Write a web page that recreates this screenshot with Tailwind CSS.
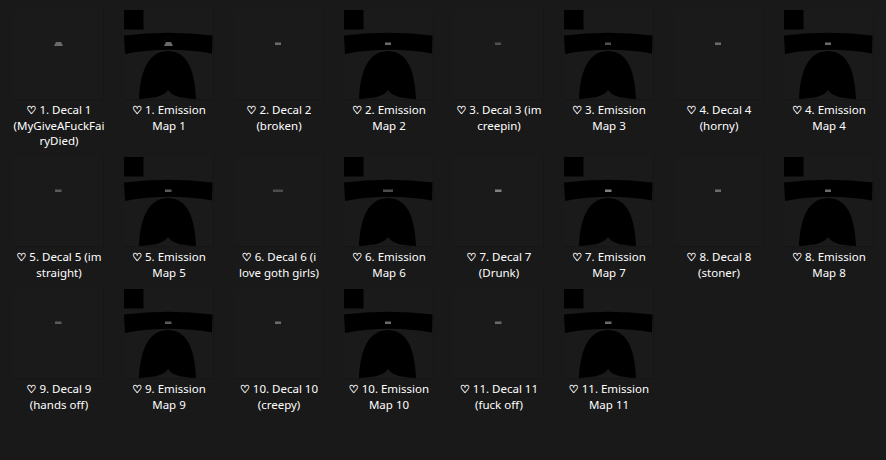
<!DOCTYPE html>
<html lang="en">
<head>
    <meta charset="UTF-8">
    <title>Decals</title>
    <script src="https://cdn.jsdelivr.net/npm/@tailwindcss/browser@4"></script>
</head>
<body class="bg-[#191919] overflow-hidden h-[460px] font-['Noto_Sans','Open_Sans',sans-serif] text-[11.5px] leading-[15.5px] text-white">
    <!-- shared thumbnail art -->
    <svg class="hidden">
        <symbol id="frame" viewBox="0 0 90 90">
            <path d="M89.5 0V90M0 89.5H90" stroke="#151515" fill="none"/>
        </symbol>
        <symbol id="uv" viewBox="0 0 90 90">
            <path d="M89.5 0V90M0 89.5H90" stroke="#151515" fill="none"/>
            <path d="M0 0H19.5V19.5H0Z" fill="#000"/>
            <path d="M0 25.5Q44 20 88.5 25.5L88 43.5Q44 36 1 44Z" fill="#000"/>
            <path d="M15 89C16 68 21 41.5 44 41C67 41.5 71 68 72 89C60 88 50 88 44 80C38 88 27 88 15 89Z" fill="#000"/>
        </symbol>
    </svg>
    <div class="grid grid-cols-[repeat(8,110px)] grid-rows-[139px_124px_124px] gap-y-2 pl-1 pt-[10px]">
        <div class="flex flex-col items-center"><svg class="w-[90px] h-[90px] bg-[#1a1a1a] blur-[0.4px]" viewBox="0 0 90 90"><use href="#frame"/><path d="M40 36L42 32H47L49 36Z" fill="#6a6a6a"/></svg><p class="mt-[2px] text-center whitespace-nowrap"><span class="font-['DejaVu_Sans'] text-[11px] leading-none [-webkit-text-stroke:0.3px_white]">♡</span> 1. Decal 1<br>(MyGiveAFuckFai<br>ryDied)</p></div>
        <div class="flex flex-col items-center"><svg class="w-[90px] h-[90px] bg-[#1a1a1a] blur-[0.4px]" viewBox="0 0 90 90"><use href="#uv"/><path d="M40 36L42 32H47L49 36Z" fill="#6a6a6a"/></svg><p class="mt-[2px] text-center whitespace-nowrap"><span class="font-['DejaVu_Sans'] text-[11px] leading-none [-webkit-text-stroke:0.3px_white]">♡</span> 1. Emission<br>Map 1</p></div>
        <div class="flex flex-col items-center"><svg class="w-[90px] h-[90px] bg-[#1a1a1a] blur-[0.4px]" viewBox="0 0 90 90"><use href="#frame"/><rect x="41" y="32.5" width="6" height="2.5" fill="#6a6a6a"/></svg><p class="mt-[2px] text-center whitespace-nowrap"><span class="font-['DejaVu_Sans'] text-[11px] leading-none [-webkit-text-stroke:0.3px_white]">♡</span> 2. Decal 2<br>(broken)</p></div>
        <div class="flex flex-col items-center"><svg class="w-[90px] h-[90px] bg-[#1a1a1a] blur-[0.4px]" viewBox="0 0 90 90"><use href="#uv"/><rect x="41" y="32.5" width="6" height="2.5" fill="#6a6a6a"/></svg><p class="mt-[2px] text-center whitespace-nowrap"><span class="font-['DejaVu_Sans'] text-[11px] leading-none [-webkit-text-stroke:0.3px_white]">♡</span> 2. Emission<br>Map 2</p></div>
        <div class="flex flex-col items-center"><svg class="w-[90px] h-[90px] bg-[#1a1a1a] blur-[0.4px]" viewBox="0 0 90 90"><use href="#frame"/><rect x="41" y="32.5" width="6" height="2.5" fill="#505050"/></svg><p class="mt-[2px] text-center whitespace-nowrap"><span class="font-['DejaVu_Sans'] text-[11px] leading-none [-webkit-text-stroke:0.3px_white]">♡</span> 3. Decal 3 (im<br>creepin)</p></div>
        <div class="flex flex-col items-center"><svg class="w-[90px] h-[90px] bg-[#1a1a1a] blur-[0.4px]" viewBox="0 0 90 90"><use href="#uv"/><rect x="41" y="32.5" width="6" height="2.5" fill="#505050"/></svg><p class="mt-[2px] text-center whitespace-nowrap"><span class="font-['DejaVu_Sans'] text-[11px] leading-none [-webkit-text-stroke:0.3px_white]">♡</span> 3. Emission<br>Map 3</p></div>
        <div class="flex flex-col items-center"><svg class="w-[90px] h-[90px] bg-[#1a1a1a] blur-[0.4px]" viewBox="0 0 90 90"><use href="#frame"/><rect x="41" y="32.5" width="6" height="2.5" fill="#6a6a6a"/></svg><p class="mt-[2px] text-center whitespace-nowrap"><span class="font-['DejaVu_Sans'] text-[11px] leading-none [-webkit-text-stroke:0.3px_white]">♡</span> 4. Decal 4<br>(horny)</p></div>
        <div class="flex flex-col items-center"><svg class="w-[90px] h-[90px] bg-[#1a1a1a] blur-[0.4px]" viewBox="0 0 90 90"><use href="#uv"/><rect x="41" y="32.5" width="6" height="2.5" fill="#6a6a6a"/></svg><p class="mt-[2px] text-center whitespace-nowrap"><span class="font-['DejaVu_Sans'] text-[11px] leading-none [-webkit-text-stroke:0.3px_white]">♡</span> 4. Emission<br>Map 4</p></div>

        <div class="flex flex-col items-center"><svg class="w-[90px] h-[90px] bg-[#1a1a1a] blur-[0.4px]" viewBox="0 0 90 90"><use href="#frame"/><rect x="41" y="32.5" width="6.5" height="2.5" fill="#5a5a5a"/></svg><p class="mt-[2px] text-center whitespace-nowrap"><span class="font-['DejaVu_Sans'] text-[11px] leading-none [-webkit-text-stroke:0.3px_white]">♡</span> 5. Decal 5 (im<br>straight)</p></div>
        <div class="flex flex-col items-center"><svg class="w-[90px] h-[90px] bg-[#1a1a1a] blur-[0.4px]" viewBox="0 0 90 90"><use href="#uv"/><rect x="41" y="32.5" width="6.5" height="2.5" fill="#5a5a5a"/></svg><p class="mt-[2px] text-center whitespace-nowrap"><span class="font-['DejaVu_Sans'] text-[11px] leading-none [-webkit-text-stroke:0.3px_white]">♡</span> 5. Emission<br>Map 5</p></div>
        <div class="flex flex-col items-center"><svg class="w-[90px] h-[90px] bg-[#1a1a1a] blur-[0.4px]" viewBox="0 0 90 90"><use href="#frame"/><rect x="39" y="32.5" width="10" height="2.5" fill="#4c4c4c"/></svg><p class="mt-[2px] text-center whitespace-nowrap"><span class="font-['DejaVu_Sans'] text-[11px] leading-none [-webkit-text-stroke:0.3px_white]">♡</span> 6. Decal 6 (i<br>love goth girls)</p></div>
        <div class="flex flex-col items-center"><svg class="w-[90px] h-[90px] bg-[#1a1a1a] blur-[0.4px]" viewBox="0 0 90 90"><use href="#uv"/><rect x="39" y="32.5" width="10" height="2.5" fill="#4c4c4c"/></svg><p class="mt-[2px] text-center whitespace-nowrap"><span class="font-['DejaVu_Sans'] text-[11px] leading-none [-webkit-text-stroke:0.3px_white]">♡</span> 6. Emission<br>Map 6</p></div>
        <div class="flex flex-col items-center"><svg class="w-[90px] h-[90px] bg-[#1a1a1a] blur-[0.4px]" viewBox="0 0 90 90"><use href="#frame"/><rect x="41" y="32.5" width="6.5" height="2.5" fill="#808080"/></svg><p class="mt-[2px] text-center whitespace-nowrap"><span class="font-['DejaVu_Sans'] text-[11px] leading-none [-webkit-text-stroke:0.3px_white]">♡</span> 7. Decal 7<br>(Drunk)</p></div>
        <div class="flex flex-col items-center"><svg class="w-[90px] h-[90px] bg-[#1a1a1a] blur-[0.4px]" viewBox="0 0 90 90"><use href="#uv"/><rect x="41" y="32.5" width="6.5" height="2.5" fill="#808080"/></svg><p class="mt-[2px] text-center whitespace-nowrap"><span class="font-['DejaVu_Sans'] text-[11px] leading-none [-webkit-text-stroke:0.3px_white]">♡</span> 7. Emission<br>Map 7</p></div>
        <div class="flex flex-col items-center"><svg class="w-[90px] h-[90px] bg-[#1a1a1a] blur-[0.4px]" viewBox="0 0 90 90"><use href="#frame"/><rect x="41" y="32.5" width="6" height="2.5" fill="#6a6a6a"/></svg><p class="mt-[2px] text-center whitespace-nowrap"><span class="font-['DejaVu_Sans'] text-[11px] leading-none [-webkit-text-stroke:0.3px_white]">♡</span> 8. Decal 8<br>(stoner)</p></div>
        <div class="flex flex-col items-center"><svg class="w-[90px] h-[90px] bg-[#1a1a1a] blur-[0.4px]" viewBox="0 0 90 90"><use href="#uv"/><rect x="41" y="32.5" width="6" height="2.5" fill="#6a6a6a"/></svg><p class="mt-[2px] text-center whitespace-nowrap"><span class="font-['DejaVu_Sans'] text-[11px] leading-none [-webkit-text-stroke:0.3px_white]">♡</span> 8. Emission<br>Map 8</p></div>

        <div class="flex flex-col items-center"><svg class="w-[90px] h-[90px] bg-[#1a1a1a] blur-[0.4px]" viewBox="0 0 90 90"><use href="#frame"/><rect x="41" y="32.5" width="6.5" height="2.5" fill="#5a5a5a"/></svg><p class="mt-[2px] text-center whitespace-nowrap"><span class="font-['DejaVu_Sans'] text-[11px] leading-none [-webkit-text-stroke:0.3px_white]">♡</span> 9. Decal 9<br>(hands off)</p></div>
        <div class="flex flex-col items-center"><svg class="w-[90px] h-[90px] bg-[#1a1a1a] blur-[0.4px]" viewBox="0 0 90 90"><use href="#uv"/><rect x="41" y="32.5" width="6.5" height="2.5" fill="#5a5a5a"/></svg><p class="mt-[2px] text-center whitespace-nowrap"><span class="font-['DejaVu_Sans'] text-[11px] leading-none [-webkit-text-stroke:0.3px_white]">♡</span> 9. Emission<br>Map 9</p></div>
        <div class="flex flex-col items-center"><svg class="w-[90px] h-[90px] bg-[#1a1a1a] blur-[0.4px]" viewBox="0 0 90 90"><use href="#frame"/><rect x="41" y="32.5" width="6" height="2.5" fill="#6a6a6a"/></svg><p class="mt-[2px] text-center whitespace-nowrap"><span class="font-['DejaVu_Sans'] text-[11px] leading-none [-webkit-text-stroke:0.3px_white]">♡</span> 10. Decal 10<br>(creepy)</p></div>
        <div class="flex flex-col items-center"><svg class="w-[90px] h-[90px] bg-[#1a1a1a] blur-[0.4px]" viewBox="0 0 90 90"><use href="#uv"/><rect x="41" y="32.5" width="6" height="2.5" fill="#6a6a6a"/></svg><p class="mt-[2px] text-center whitespace-nowrap"><span class="font-['DejaVu_Sans'] text-[11px] leading-none [-webkit-text-stroke:0.3px_white]">♡</span> 10. Emission<br>Map 10</p></div>
        <div class="flex flex-col items-center"><svg class="w-[90px] h-[90px] bg-[#1a1a1a] blur-[0.4px]" viewBox="0 0 90 90"><use href="#frame"/><rect x="41" y="32.5" width="6.5" height="2.5" fill="#6a6a6a"/></svg><p class="mt-[2px] text-center whitespace-nowrap"><span class="font-['DejaVu_Sans'] text-[11px] leading-none [-webkit-text-stroke:0.3px_white]">♡</span> 11. Decal 11<br>(fuck off)</p></div>
        <div class="flex flex-col items-center"><svg class="w-[90px] h-[90px] bg-[#1a1a1a] blur-[0.4px]" viewBox="0 0 90 90"><use href="#uv"/><rect x="41" y="32.5" width="6.5" height="2.5" fill="#6a6a6a"/></svg><p class="mt-[2px] text-center whitespace-nowrap"><span class="font-['DejaVu_Sans'] text-[11px] leading-none [-webkit-text-stroke:0.3px_white]">♡</span> 11. Emission<br>Map 11</p></div>
    </div>
</body>
</html>
